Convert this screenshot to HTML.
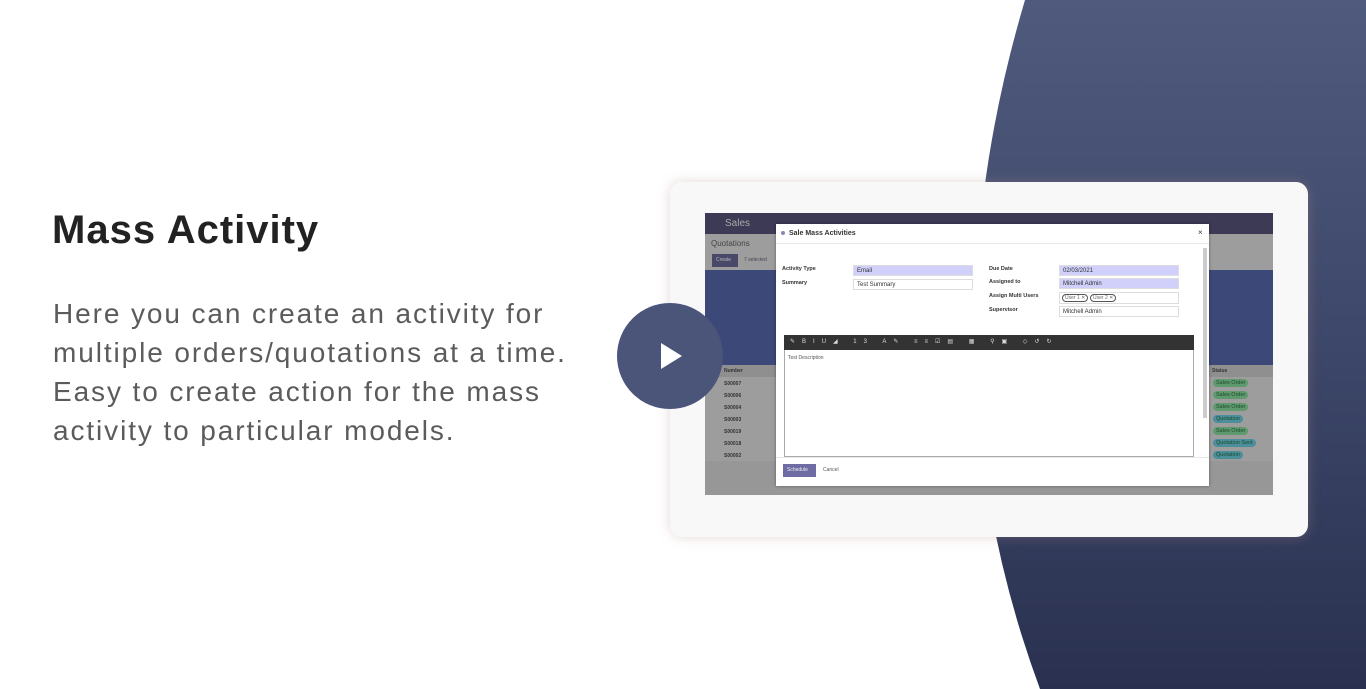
<!DOCTYPE html>
<html style="width:1366px;height:689px;overflow:hidden"><head><meta charset="utf-8"><style>
*{margin:0;padding:0;box-sizing:border-box}
body{width:1366px;height:689px;overflow:hidden;background:#fff;position:relative;font-family:"Liberation Sans",sans-serif}
svg.bg{position:absolute;left:0;top:0}
h1{position:absolute;left:52px;top:208px;font-size:40px;font-weight:bold;color:#222;letter-spacing:1px}
p.d{position:absolute;left:53px;top:294px;font-size:28px;line-height:39px;color:#5b5b5b;letter-spacing:1.9px;white-space:nowrap}
.card{position:absolute;left:670px;top:182px;width:638px;height:355px;background:#f8f8f8;border-radius:12px;box-shadow:0 0 12px rgba(180,140,140,.35)}
.shot{position:absolute;left:705px;top:213px;width:568px;height:282px;background:#9d9d9d;overflow:hidden}
.a{position:absolute}
.play{position:absolute;left:617px;top:303px;width:106px;height:106px;border-radius:50%;background:#4a5579}
.play:after{content:"";position:absolute;left:44px;top:40px;border-left:21px solid #fff;border-top:13px solid transparent;border-bottom:13px solid transparent}
.t{position:absolute;font-size:6px;color:#333;white-space:nowrap}
.b{font-weight:bold}
.inp{position:absolute;height:11px;border:1px solid #ddd;font-size:6px;padding:2px 3px;color:#333}
.tag{position:absolute;font-size:5px;border:1px solid #555;border-radius:5px;padding:0 2px;color:#666}
.pill{position:absolute;left:508px;font-size:5.5px;color:#1d4a2a;background:#5e9a6e;border-radius:5px;padding:1px 3px}
</style></head><body>
<svg class="bg" width="1366" height="689"><defs><linearGradient id="g" x1="0" y1="0" x2="0" y2="1"><stop offset="0" stop-color="#4f5a7c"/><stop offset="0.5" stop-color="#3d4769"/><stop offset="1" stop-color="#2a3150"/></linearGradient></defs><path d="M1025,0 Q918,360 1040,689 L1366,689 L1366,0 Z" fill="url(#g)"/></svg>
<h1>Mass Activity</h1>
<p class="d">Here you can create an activity for<br>multiple orders/quotations at a time.<br>Easy to create action for the mass<br>activity to particular models.</p>
<div class="card"></div>
<div class="shot">
 <div class="a" style="left:0;top:0;width:568px;height:21px;background:#3d3a56"></div>
 <div class="t" style="left:20px;top:5px;font-size:10px;color:#aaa">Sales</div>
 <div class="t" style="left:6px;top:26px;font-size:8px;color:#444">Quotations</div>
 <div class="a" style="left:7px;top:41px;width:26px;height:13px;background:#4a4868"></div>
 <div class="t" style="left:11px;top:44px;font-size:5px;color:#bbb">Create</div>
 <div class="t" style="left:39px;top:44px;font-size:5px;color:#445">7 selected</div>
 <div class="a" style="left:0;top:57px;width:568px;height:95px;background:#3c4878"></div>
 <div class="a" style="left:0;top:152px;width:568px;height:12px;background:#8f8f8f"></div>
 <div class="t b" style="left:19px;top:155px;font-size:5px">Number</div>
 <div class="t b" style="left:507px;top:155px;font-size:5px">Status</div>
 <div class="t b" style="left:19px;top:168px;font-size:5px">S00007</div>
 <div class="t b" style="left:19px;top:180px;font-size:5px">S00006</div>
 <div class="t b" style="left:19px;top:192px;font-size:5px">S00004</div>
 <div class="t b" style="left:19px;top:204px;font-size:5px">S00003</div>
 <div class="t b" style="left:19px;top:216px;font-size:5px">S00019</div>
 <div class="t b" style="left:19px;top:228px;font-size:5px">S00018</div>
 <div class="t b" style="left:19px;top:240px;font-size:5px">S00002</div>
 <div class="pill" style="top:166px">Sales Order</div>
 <div class="pill" style="top:178px">Sales Order</div>
 <div class="pill" style="top:190px">Sales Order</div>
 <div class="pill" style="top:202px;background:#4a8f9a">Quotation</div>
 <div class="pill" style="top:214px">Sales Order</div>
 <div class="pill" style="top:226px;background:#4a8f9a">Quotation Sent</div>
 <div class="pill" style="top:238px;background:#4a8f9a">Quotation</div>
 <div class="a" style="left:0;top:248px;width:568px;height:34px;background:#979797"></div>
 <div class="a" style="left:71px;top:11px;width:433px;height:262px;background:#fff;box-shadow:0 0 3px rgba(0,0,0,.4)">
  <div class="a" style="left:0;top:19px;width:433px;height:1px;background:#e8e8e8"></div>
  <div class="t b" style="left:13px;top:6px;font-size:7px">Sale Mass Activities</div>
  <div class="a" style="left:5px;top:7px;width:4px;height:4px;border-radius:2px;background:#8a86b8"></div>
  <div class="t" style="left:422px;top:4px;font-size:8px">×</div>
  <div class="t b" style="left:6px;top:42px;font-size:5.5px">Activity Type</div>
  <div class="t b" style="left:6px;top:56px;font-size:5.5px">Summary</div>
  <div class="inp" style="left:77px;top:41px;width:120px;background:#d0d0fb">Email</div>
  <div class="inp" style="left:77px;top:55px;width:120px">Test Summary</div>
  <div class="t b" style="left:213px;top:42px;font-size:5.5px">Due Date</div>
  <div class="t b" style="left:213px;top:55px;font-size:5.5px">Assigned to</div>
  <div class="t b" style="left:213px;top:69px;font-size:5.5px">Assign Multi Users</div>
  <div class="t b" style="left:213px;top:83px;font-size:5.5px">Supervisor</div>
  <div class="inp" style="left:283px;top:41px;width:120px;background:#d0d0fb">02/03/2021</div>
  <div class="inp" style="left:283px;top:54px;width:120px;background:#d0d0fb">Mitchell Admin</div>
  <div class="inp" style="left:283px;top:68px;width:120px;height:12px"></div>
  <div class="tag" style="left:286px;top:70px">User 1 ✕</div>
  <div class="tag" style="left:314px;top:70px">User 2 ✕</div>
  <div class="inp" style="left:283px;top:82px;width:120px">Mitchell Admin</div>
  <div class="a" style="left:427px;top:24px;width:4px;height:170px;background:#ccc"></div>
  <div class="a" style="left:8px;top:111px;width:410px;height:15px;background:#333"></div>
  <div class="t" style="left:14px;top:114px;font-size:6px;color:#ddd;letter-spacing:7px">✎BIU◢ 13 A✎ ≡≡☑▤ ▦ ⚲▣ ◇↺↻</div>
  <div class="a" style="left:8px;top:126px;width:410px;height:107px;border:1px solid #aaa;border-top:0"></div>
  <div class="t" style="left:12px;top:131px;font-size:5px;color:#555">Test Description</div>
  <div class="a" style="left:0;top:233px;width:433px;height:1px;background:#e8e8e8"></div>
  <div class="a" style="left:7px;top:240px;width:33px;height:13px;background:#6f6ca3"></div>
  <div class="t" style="left:11px;top:243px;font-size:5px;color:#eee">Schedule</div>
  <div class="t" style="left:47px;top:243px;font-size:5px;color:#555">Cancel</div>
 </div>
</div>
<div class="play"></div>
</body></html>
